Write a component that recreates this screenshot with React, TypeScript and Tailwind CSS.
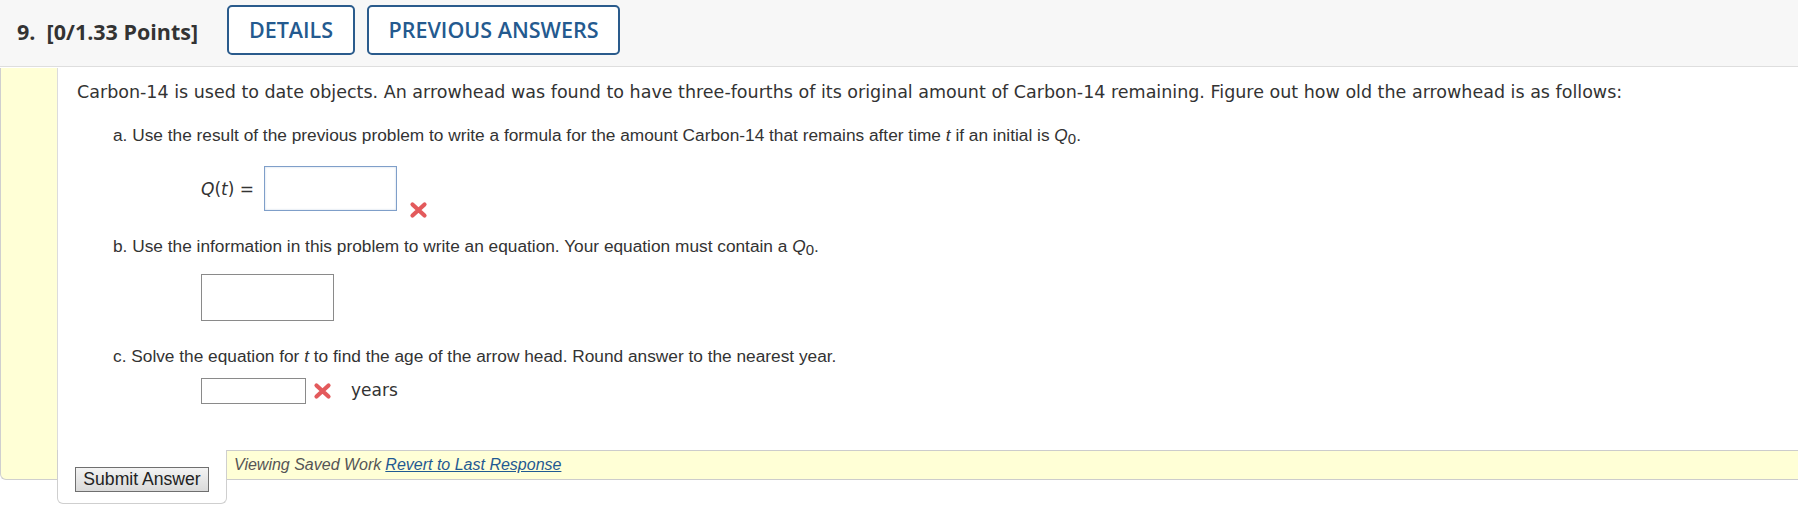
import React from "react";

function RedX() {
  return (
    <svg width="19" height="18" viewBox="0 0 19 18" className="shrink-0">
      <path d="M3.5 3.5 L15.5 14.5 M15.5 3.5 L3.5 14.5" stroke="#e35a5c" strokeWidth="4.2" strokeLinecap="round" />
    </svg>
  );
}

function Q0() {
  return (
    <span>
      <i>Q</i>
      <sub className="text-[15px] relative top-[3px]">0</sub>.
    </span>
  );
}

export default function App() {
  const arial = "font-['Liberation_Sans',Arial,sans-serif]";
  const verdana = "font-['DejaVu_Sans',Verdana,sans-serif]";
  return (
    <div className="w-[1798px] h-[506px] bg-white text-[#333] overflow-hidden">
      {/* header */}
      <div className="h-[67px] bg-[#f7f7f7] border-b border-[#dedede] flex items-start font-['Open_Sans',sans-serif]">
        <div className="pl-[17px] pt-[16px] text-[21.5px] font-bold text-[#333] whitespace-pre w-[227px]">
          9.  [0/1.33 Points]
        </div>
        <button className="mt-[5px] h-[50px] w-[128px] border-2 border-[#2a5b8c] rounded-[5px] bg-white text-[#245a8f] text-[21.5px] font-semibold flex items-center justify-center">
          DETAILS
        </button>
        <button className="mt-[5px] ml-[12px] h-[50px] w-[253px] border-2 border-[#2a5b8c] rounded-[5px] bg-white text-[#245a8f] text-[21.5px] font-semibold flex items-center justify-center">
          PREVIOUS ANSWERS
        </button>
      </div>

      {/* main */}
      <div className="flex items-stretch mt-[1px]">
        <div className="w-[57px] shrink-0 bg-[#ffffd6] border-l border-b border-[#cfcfcf] rounded-bl-[6px] mb-[24px]" />
        <div className="flex-1 flex flex-col">
          <div className="border-l border-[#dcdcdc] flex flex-col pb-[46px]">
            <p className={`${verdana} text-[17.5px] leading-[24px] mt-[12px] pl-[19px] text-[#333]`}>
              Carbon-14 is used to date objects. An arrowhead was found to have three-fourths of its original amount of Carbon-14 remaining. Figure out how old the arrowhead is as follows:
            </p>
            <p className={`${arial} text-[17.3px] leading-[24px] mt-[19px] pl-[55px] text-[#333]`}>
              a. Use the result of the previous problem to write a formula for the amount Carbon-14 that remains after time <i>t</i> if an initial is <Q0 />
            </p>
            <div className="flex items-start mt-[19px] pl-[143px]">
              <span className={`${verdana} text-[17px] leading-[24px] mt-[11px] text-[#333] w-[63px]`}>
                <i>Q</i>(<i>t</i>) =
              </span>
              <div className="w-[133px] h-[45px] border border-[#7f9fc9] bg-white shadow-[inset_0_0_2px_rgba(127,159,201,0.5)]" />
              <div className="mt-[35px] ml-[12px]">
                <RedX />
              </div>
            </div>
            <p className={`${arial} text-[17.3px] leading-[24px] mt-[15px] pl-[55px] text-[#333]`}>
              b. Use the information in this problem to write an equation. Your equation must contain a <Q0 />
            </p>
            <div className="mt-[16px] ml-[143px] w-[133px] h-[47px] border border-[#8a8a8a] bg-white" />
            <p className={`${arial} text-[17.3px] leading-[24px] mt-[23px] pl-[55px] text-[#333]`}>
              c. Solve the equation for <i>t</i> to find the age of the arrow head. Round answer to the nearest year.
            </p>
            <div className="flex items-center mt-[10px] pl-[143px]">
              <div className="w-[105px] h-[26px] border border-[#8a8a8a] bg-white" />
              <div className="ml-[7px]">
                <RedX />
              </div>
              <span className={`${verdana} text-[17px] ml-[19px] text-[#333]`}>years</span>
            </div>
          </div>

          {/* bottom row */}
          <div className="flex items-start">
            <div className="w-[170px] h-[54px] shrink-0 bg-white border-l border-r border-b border-[#cfcfcf] rounded-b-[6px] pl-[17px] pt-[17px]">
              <button className={`${arial} h-[25px] w-[134px] text-[17.6px] text-[#222] border border-[#6f6f6f] bg-gradient-to-b from-[#f3f3f3] to-[#dadada] flex items-center justify-center`}>
                Submit Answer
              </button>
            </div>
            <div className={`${arial} flex-1 h-[30px] bg-[#ffffd6] border-t border-b border-[#cccccc] flex items-center pl-[7px] text-[16px] italic`}>
              <span className="text-[#555]">Viewing Saved Work</span>
              <span className="ml-[4px] text-[#1f5a92] underline">Revert to Last Response</span>
            </div>
          </div>
        </div>
      </div>
    </div>
  );
}
